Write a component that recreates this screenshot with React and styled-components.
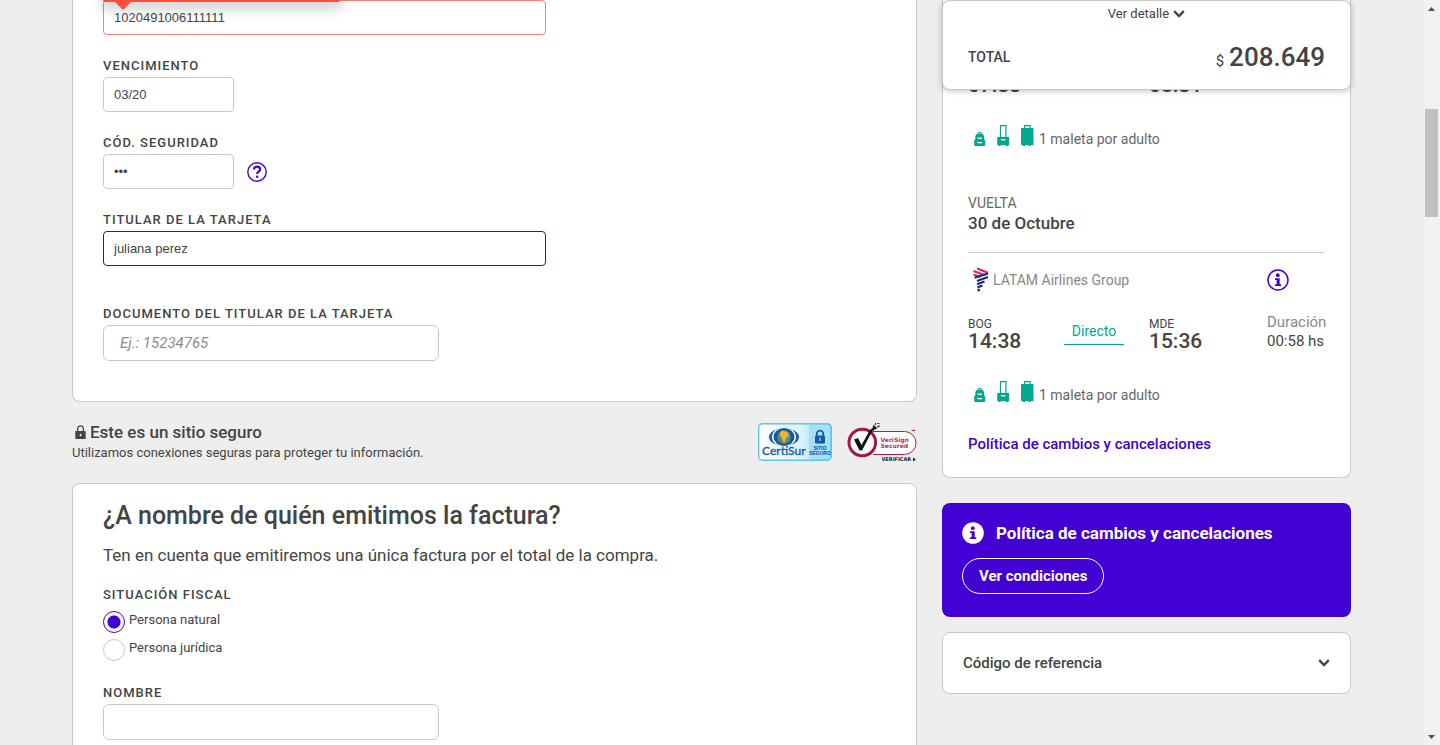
import React from 'react';
import styled, { createGlobalStyle } from 'styled-components';

const ink = '#444';
const violet = '#4300d2';
const teal = '#05a68f';
const line = '#c9c9c9';

const GlobalStyle = createGlobalStyle`
  *, *::before, *::after { box-sizing: border-box; }
  body {
    margin: 0;
    background: #eee;
    color: ${ink};
    font-family: Roboto, "Liberation Sans", sans-serif;
    font-size: 16px;
  }
  h2, h3, p, fieldset, legend { margin: 0; padding: 0; border: 0; font-weight: 400; }
  button, input { font-family: inherit; color: inherit; }
  svg { display: block; flex: none; }
`;

const Shell = styled.div`
  display: grid;
  grid-template-columns: minmax(0, 1fr) 17px;
  height: 100vh;
  overflow: hidden;
`;

const Page = styled.main`
  overflow: hidden;
  display: flex;
  justify-content: center;
`;

const Columns = styled.div`
  width: 90%;
  max-width: 1279px;
  display: grid;
  grid-template-columns: minmax(0, 1fr) 409px;
  column-gap: 25px;
  align-items: start;
`;

const Panel = styled.section`
  background: #fff;
  border: 1px solid ${line};
  border-radius: ${(p) => (p.$cut ? '0 0 8px 8px' : '8px')};
  ${(p) => p.$cut && 'border-top: 0;'}
`;

const CardForm = styled(Panel)`
  display: flex;
  flex-direction: column;
  gap: 20px;
  padding: 0 30px 40px;
`;

const Field = styled.div`
  position: relative;
  display: flex;
  flex-direction: column;
  align-items: flex-start;
  ${(p) => p.$spaced && 'margin-top: 17px;'}
`;

const Label = styled.label`
  font-size: 13px;
  font-weight: 500;
  line-height: 22px;
  letter-spacing: 1px;
  text-transform: uppercase;
`;

const Input = styled.input`
  width: ${(p) => p.$width};
  max-width: 100%;
  height: 35px;
  padding: 0 10px;
  border: 1px solid ${(p) => p.$border || line};
  border-radius: 4px;
  background: #fff;
  font-family: "Liberation Sans", sans-serif;
  font-size: 13px;
  outline: none;
`;

const LargeInput = styled(Input)`
  height: 36px;
  padding: 0 16px;
  border-radius: 6px;
  font-family: Roboto, sans-serif;
  font-size: 15px;
  &::placeholder { color: #8c8c8c; font-style: italic; opacity: 1; }
`;

const ErrorTip = styled.div`
  position: absolute;
  z-index: 1;
  top: 0;
  left: 0;
  width: 237px;
  height: 2px;
  border-radius: 0 0 4px 4px;
  background: #ff4d3d;
  box-shadow: 0 3px 12px 3px rgba(0, 0, 0, 0.25);
  &::after {
    content: '';
    position: absolute;
    top: 2px;
    left: 12px;
    border: 8px solid transparent;
    border-top-color: #ff4d3d;
    border-bottom: 0;
  }
`;

const Inline = styled.div`
  display: flex;
  align-items: center;
  gap: 13px;
`;

const IconButton = styled.button`
  padding: 0;
  border: 0;
  background: none;
  color: ${violet};
  cursor: pointer;
`;

const Secure = styled.section`
  display: flex;
  justify-content: space-between;
  align-items: flex-start;
  padding: 20px 0 19px;
`;

const SecureTitle = styled.h3`
  display: flex;
  align-items: center;
  gap: 4px;
  padding-left: 3px;
  font-size: 17px;
  font-weight: 500;
  line-height: 20px;
`;

const SecureNote = styled.p`
  font-size: 13px;
  line-height: 22px;
`;

const Seals = styled.div`
  display: flex;
  gap: 15px;
  height: 42px;
`;

const Invoice = styled(Panel)`
  padding: 16px 30px 40px;
`;

const Heading = styled.h2`
  font-size: 25px;
  font-weight: 500;
  line-height: 32px;
`;

const Lead = styled.p`
  margin: 11px 0 17px;
  font-size: 17px;
  line-height: 24px;
`;

const Choices = styled.fieldset`
  display: flex;
  flex-direction: column;
  gap: 6px;
  min-width: 0;
  margin-bottom: 21px;
`;

const Legend = styled(Label)`
  margin-bottom: 5px;
`;

const Choice = styled.label`
  display: flex;
  align-items: flex-start;
  gap: 4px;
  font-size: 13px;
  line-height: 18px;
`;

const Radio = styled.input`
  appearance: none;
  width: 22px;
  height: 22px;
  margin: 0;
  border: 1px solid ${line};
  border-radius: 50%;
  background: #fff;
  &:checked {
    border-color: ${violet};
    background: radial-gradient(circle, ${violet} 6px, #fff 7px);
  }
`;

const Side = styled.aside`
  display: flex;
  flex-direction: column;
`;

const Summary = styled(Panel)`
  position: relative;
  padding: 75px 25px 22px;
`;

const TotalCard = styled.div`
  position: absolute;
  top: 0;
  left: -1px;
  right: -1px;
  height: 90px;
  padding: 3px 25px 0;
  border: 1px solid ${line};
  border-radius: 8px;
  background: #fff;
  box-shadow: 0 1px 6px rgba(0, 0, 0, 0.25);
`;

const DetailButton = styled.button`
  display: flex;
  align-items: center;
  gap: 4px;
  margin: 0 auto;
  padding: 0;
  border: 0;
  background: none;
  font-size: 13px;
  line-height: 20px;
`;

const TotalRow = styled.div`
  display: flex;
  justify-content: space-between;
  align-items: center;
  margin-top: 17px;
  font-size: 14px;
  font-weight: 500;
  line-height: 32px;
`;

const Amount = styled.span`
  display: flex;
  align-items: baseline;
  gap: 5px;
  font-size: 26px;
`;

const Currency = styled.span`
  font-size: 15px;
  font-weight: 400;
  line-height: 16px;
`;

const Leg = styled.div`
  display: grid;
  grid-template-columns: 96px 85px 118px 1fr;
  align-items: end;
`;

const Stop = styled.div`
  display: flex;
  flex-direction: column;
  font-size: 12px;
  line-height: 14px;
`;

const Time = styled.strong`
  font-size: 21px;
  font-weight: 500;
  line-height: 20px;
`;

const Direct = styled.span`
  width: 60px;
  margin-bottom: 6px;
  border-bottom: 1px solid ${teal};
  color: ${teal};
  font-size: 14px;
  line-height: 26px;
  text-align: center;
`;

const Duration = styled.div`
  display: flex;
  flex-direction: column;
  font-size: 15px;
  line-height: 19px;
  white-space: nowrap;
`;

const Muted = styled.span`
  color: #888;
`;

const Bags = styled.div`
  display: flex;
  align-items: flex-end;
  gap: 5px;
  height: 22px;
  margin: 30px 0 0 5px;
  color: #666;
  font-size: 14px;
  line-height: 15px;
`;

const ReturnHead = styled.div`
  margin-top: 46px;
  padding-bottom: 18px;
  border-bottom: 1px solid ${line};
  color: #666;
  font-size: 14px;
  line-height: 20px;
`;

const ReturnDate = styled.h3`
  color: ${ink};
  font-size: 17px;
  font-weight: 500;
  line-height: 21px;
`;

const Airline = styled.div`
  display: grid;
  grid-template-columns: 25px 1fr 58px;
  align-items: center;
  margin: 14px 0 20px;
  color: #888;
  font-size: 14px;
  line-height: 26px;
`;

const PolicyLink = styled.a`
  display: block;
  margin-top: 30px;
  color: ${violet};
  font-size: 15px;
  font-weight: 500;
  line-height: 22px;
  text-decoration: none;
`;

const Policy = styled.section`
  margin: 25px 0 15px;
  padding: 17px 20px 23px;
  border-radius: 8px;
  background: ${violet};
  color: #fff;
`;

const PolicyTitle = styled.h3`
  display: flex;
  align-items: center;
  gap: 12px;
  margin-bottom: 12px;
  font-size: 17px;
  font-weight: 700;
  line-height: 26px;
`;

const PillButton = styled.button`
  height: 36px;
  padding: 0 16px;
  border: 1px solid #fff;
  border-radius: 18px;
  background: transparent;
  color: #fff;
  font-size: 15px;
  font-weight: 700;
`;

const Reference = styled.button`
  display: flex;
  justify-content: space-between;
  align-items: center;
  height: 62px;
  padding: 0 20px;
  border: 1px solid ${line};
  border-radius: 8px;
  background: #fff;
  font-size: 15px;
  font-weight: 500;
`;

const Scrollbar = styled.div`
  display: grid;
  grid-template-rows: 17px minmax(0, 1fr) 17px;
  background: #f1f1f1;
`;

const ScrollTrack = styled.div`
  display: grid;
  grid-template-rows: 92fr 108fr 511fr;
  padding: 0 2px;
`;

const ScrollThumb = styled.div`
  grid-row: 2;
  background: #c1c1c1;
`;

function Chevron() {
  return (
    <svg width="12" height="10" viewBox="0 0 12 10" fill="none" stroke={ink} strokeWidth="2.4">
      <path d="M1.2 2.2 6 7l4.8-4.8" />
    </svg>
  );
}

function HelpIcon() {
  return (
    <svg width="20" height="20" viewBox="0 0 20 20" fill="none" stroke="currentColor">
      <circle cx="10" cy="10" r="9.2" strokeWidth="1.4" />
      <path d="M7 7.4C7 5.400 8.300 4.700 10 4.700s3.100 .9 3.100 2.700c0 2.300-3 2.200-3 4.600" strokeWidth="2.200" />
      <path d="M9 13.600h2.200v2.200H9z" fill="currentColor" stroke="none" />
    </svg>
  );
}

function InfoIcon({ solid }) {
  const mark = solid ? violet : 'currentColor';
  return (
    <svg width="22" height="22" viewBox="0 0 22 22">
      <circle cx="11" cy="11" r={solid ? 10.8 : 10} fill={solid ? '#fff' : 'none'} stroke={solid ? 'none' : 'currentColor'} strokeWidth="1.500" />
      <circle cx="10.800" cy="6.200" r="1.900" fill={mark} />
      <path d="M8 9.300h4.700v5.900h1.500V17H8v-1.800h1.700V11H8z" fill={mark} />
    </svg>
  );
}

function LockIcon() {
  return (
    <svg width="11" height="14" viewBox="0 0 11 14">
      <path d="M2.700 7V3.600a2.800 2.800 0 0 1 5.600 0V7" fill="none" stroke={ink} strokeWidth="1.300" />
      <path d="M1 6h9a.7.7 0 0 1 .7.7V13.300a.7.7 0 0 1-.7.7H1a.7.7 0 0 1-.7-.7V6.700A.7.7 0 0 1 1 6z" fill={ink} />
      <path d="M4.800 8.800h1.500v2.600H4.800z" fill="#eee" />
    </svg>
  );
}

function BagIcons() {
  return (
    <svg width="61" height="22" viewBox="0 0 61 22" fill={teal}>
      <path d="M4.500 9V8.600A1.600 1.600 0 0 1 6 7h1.500A1.600 1.600 0 0 1 9 8.600V9a2.200 2.200 0 0 1 2 2.200v3.300h.4a.8.8 0 0 1 .8.8V20a1 1 0 0 1-1 1H2.200a1 1 0 0 1-1-1v-4.700a.8.8 0 0 1 .8-.8h.4v-3.300A2.200 2.200 0 0 1 4.500 9z" />
      <path d="M5.800 8.200h1.900V9H5.800zM4.500 12.500h4.500v1.200H4.500zM4.500 17h4.500v1.200H4.500z" fill="#fff" />
      <path d="M27.500 12V.6h5.400V12" fill="none" stroke={teal} strokeWidth="1.200" />
      <path d="M25.200 12h10a1 1 0 0 1 1 1v6.300a1 1 0 0 1-1 1h-.2V21h-2.200v-.7h-5.200V21h-2.200v-.7h-.2a1 1 0 0 1-1-1V13a1 1 0 0 1 1-1z" />
      <path d="M28 14.200h4.500v1.200H28z" fill="#fff" />
      <path d="M51.500 3.500V.6h5.600v2.900" fill="none" stroke={teal} strokeWidth="1.200" />
      <path d="M49 3h10.500a1 1 0 0 1 1 1v15.300a1 1 0 0 1-1 1H58V21h-2v-.7h-4V21h-2v-.7h-1a1 1 0 0 1-1-1V4a1 1 0 0 1 1-1z" />
    </svg>
  );
}

function LatamIcon() {
  return (
    <svg width="25" height="26" viewBox="0 0 25 26" fill="none">
      <g stroke="#e4254c" strokeWidth="2">
        <path d="M9 1.500 20 5.800" />
        <path d="M5.500 4 17 8.300" />
        <path d="M5.500 7.600 12.500 10" />
      </g>
      <g stroke="#1f2b78" strokeWidth="2.200">
        <path d="M20 6.500 6.500 10.800" />
        <path d="M20 10 9 14" />
        <path d="M16.500 14.500 9 17.300" />
        <path d="M14.500 18.500 9.500 20.400" />
        <path d="M12 22.500 9.500 23.700" />
      </g>
    </svg>
  );
}

function CertiSurSeal() {
  return (
    <svg width="74" height="40" viewBox="0 0 74 40" role="img" aria-label="CertiSur sitio seguro">
      <defs>
        <linearGradient id="sealSky" x1="0" x2="1" y1="0" y2="0">
          <stop offset="0" stopColor="#fff" />
          <stop offset="0.600" stopColor="#d9f3fd" />
          <stop offset="1" stopColor="#7ccff2" />
        </linearGradient>
      </defs>
      <rect x="0.700" y="1.700" width="72.600" height="36.600" rx="4" fill="url(#sealSky)" stroke="#5cc4ee" strokeWidth="1.400" />
      <path d="M51 3h18a3 3 0 0 1 3 3v28a3 3 0 0 1-3 3H51z" fill="#a6e0f7" />
      <ellipse cx="26" cy="15" rx="15" ry="9" fill="#1d5fa8" />
      <ellipse cx="26" cy="15" rx="12" ry="9.600" fill="#fff" />
      <ellipse cx="26" cy="15" rx="10.500" ry="9" fill="#155a9c" />
      <circle cx="26" cy="15" r="6.800" fill="#5c8b84" />
      <path d="M22 11l2-2.500 5 1.500 2 3.500-3 3-2 5-2-5-2-3z" fill="#f1b32c" />
      <text x="4" y="33" fontFamily="Lato, sans-serif" fontSize="12" fontWeight="500" fill="#1b5ba5" stroke="#1b5ba5" strokeWidth="0.300">CertiSur</text>
      <path d="M58.700 15v-3a3.300 3.300 0 0 1 6.600 0v3" fill="none" stroke="#155a9c" strokeWidth="1.700" />
      <rect x="57" y="13.500" width="10" height="8" rx="1" fill="#155a9c" />
      <path d="M61.300 15.500h1.400v3.500h-1.400z" fill="#8dd5f4" />
      <text x="62" y="28" textAnchor="middle" fontFamily="Liberation Sans, sans-serif" fontSize="5" fontWeight="700" fill="#164c8c">SITIO</text>
      <text x="62" y="33" textAnchor="middle" fontFamily="Liberation Sans, sans-serif" fontSize="5" fontWeight="700" fill="#164c8c">SEGURO</text>
    </svg>
  );
}

function VeriSignSeal() {
  return (
    <svg width="70" height="42" viewBox="0 0 70 42" role="img" aria-label="VeriSign Secured">
      <path d="M26 9.500h31.500a11.500 11.500 0 0 1 0 23H26" fill="#fff" stroke="#ae1a45" strokeWidth="1" />
      <circle cx="15.300" cy="20.500" r="13.300" fill="#fff" stroke="#a91644" strokeWidth="3" />
      <path d="M7 17.500l4-1.500 3.500 7L23 8l5-4 1.500 1.500-5 5L15 28.500h-2.500z" fill="#111" />
      <path d="M26 5l3-3.500M28 7l4-3" stroke="#111" strokeWidth="1.200" strokeDasharray="2 1" />
      <path d="M30 1.500h2.500M31 4h2M64.500 8.500h3.500" stroke="#a91644" strokeWidth="1" />
      <text x="33.500" y="20" fontFamily="DejaVu Sans, sans-serif" fontSize="6" fontWeight="700" fill="#b8325a">VeriSign</text>
      <text x="33.500" y="26" fontFamily="DejaVu Sans, sans-serif" fontSize="6" fontWeight="700" fill="#b8325a">Secured</text>
      <text x="34.500" y="39" fontFamily="DejaVu Sans, sans-serif" fontSize="5" fontWeight="700" fill="#222">VERIFICAR</text>
      <path d="M66 35.500l3 2-3 2z" fill="#222" />
    </svg>
  );
}

function Baggage() {
  return (
    <Bags>
      <BagIcons />
      <span>1 maleta por adulto</span>
    </Bags>
  );
}

function Arrow({ down }) {
  return (
    <svg width="17" height="17" viewBox="0 0 17 17" fill="#505050">
      <path d={down ? 'M5 7h7l-3.500 4z' : 'M5 11h7l-3.500-4z'} />
    </svg>
  );
}

export default function App() {
  return (
    <Shell>
      <GlobalStyle />
      <Page>
        <Columns>
          <div>
            <CardForm $cut>
              <Field>
                <ErrorTip />
                <Input $width="443px" $border="#ff8073" aria-label="Número de tarjeta" defaultValue="1020491006111111" />
              </Field>
              <Field>
                <Label htmlFor="expiry">Vencimiento</Label>
                <Input id="expiry" $width="131px" defaultValue="03/20" />
              </Field>
              <Field>
                <Label htmlFor="code">Cód. seguridad</Label>
                <Inline>
                  <Input id="code" type="password" $width="131px" defaultValue="123" />
                  <IconButton type="button" aria-label="Ayuda"><HelpIcon /></IconButton>
                </Inline>
              </Field>
              <Field>
                <Label htmlFor="holder">Titular de la tarjeta</Label>
                <Input id="holder" $width="443px" $border={violet} defaultValue="juliana perez" />
              </Field>
              <Field $spaced>
                <Label htmlFor="document">Documento del titular de la tarjeta</Label>
                <LargeInput id="document" $width="336px" placeholder="Ej.: 15234765" />
              </Field>
            </CardForm>
            <Secure>
              <div>
                <SecureTitle><LockIcon />Este es un sitio seguro</SecureTitle>
                <SecureNote>Utilizamos conexiones seguras para proteger tu información.</SecureNote>
              </div>
              <Seals>
                <CertiSurSeal />
                <VeriSignSeal />
              </Seals>
            </Secure>
            <Invoice>
              <Heading>¿A nombre de quién emitimos la factura?</Heading>
              <Lead>Ten en cuenta que emitiremos una única factura por el total de la compra.</Lead>
              <Choices>
                <Legend as="legend">Situación fiscal</Legend>
                <Choice><Radio type="radio" name="fiscal" defaultChecked />Persona natural</Choice>
                <Choice><Radio type="radio" name="fiscal" />Persona jurídica</Choice>
              </Choices>
              <Field>
                <Label htmlFor="name">Nombre</Label>
                <LargeInput id="name" $width="336px" />
              </Field>
            </Invoice>
          </div>
          <Side>
            <Summary $cut>
              <Leg>
                <Time>07:33</Time>
                <span />
                <Time>08:31</Time>
              </Leg>
              <Baggage />
              <ReturnHead>
                VUELTA
                <ReturnDate>30 de Octubre</ReturnDate>
              </ReturnHead>
              <Airline>
                <LatamIcon />
                <span>LATAM Airlines Group</span>
                <IconButton type="button" aria-label="Información del vuelo"><InfoIcon /></IconButton>
              </Airline>
              <Leg>
                <Stop>BOG<Time>14:38</Time></Stop>
                <Direct>Directo</Direct>
                <Stop>MDE<Time>15:36</Time></Stop>
                <Duration><Muted>Duración</Muted>00:58 hs</Duration>
              </Leg>
              <Baggage />
              <PolicyLink href="#politica">Política de cambios y cancelaciones</PolicyLink>
              <TotalCard>
                <DetailButton type="button">Ver detalle <Chevron /></DetailButton>
                <TotalRow>
                  TOTAL
                  <Amount><Currency>$</Currency>208.649</Amount>
                </TotalRow>
              </TotalCard>
            </Summary>
            <Policy id="politica">
              <PolicyTitle><InfoIcon solid />Política de cambios y cancelaciones</PolicyTitle>
              <PillButton type="button">Ver condiciones</PillButton>
            </Policy>
            <Reference type="button">Código de referencia <Chevron /></Reference>
          </Side>
        </Columns>
      </Page>
      <Scrollbar aria-hidden="true">
        <Arrow />
        <ScrollTrack><ScrollThumb /></ScrollTrack>
        <Arrow down />
      </Scrollbar>
    </Shell>
  );
}
